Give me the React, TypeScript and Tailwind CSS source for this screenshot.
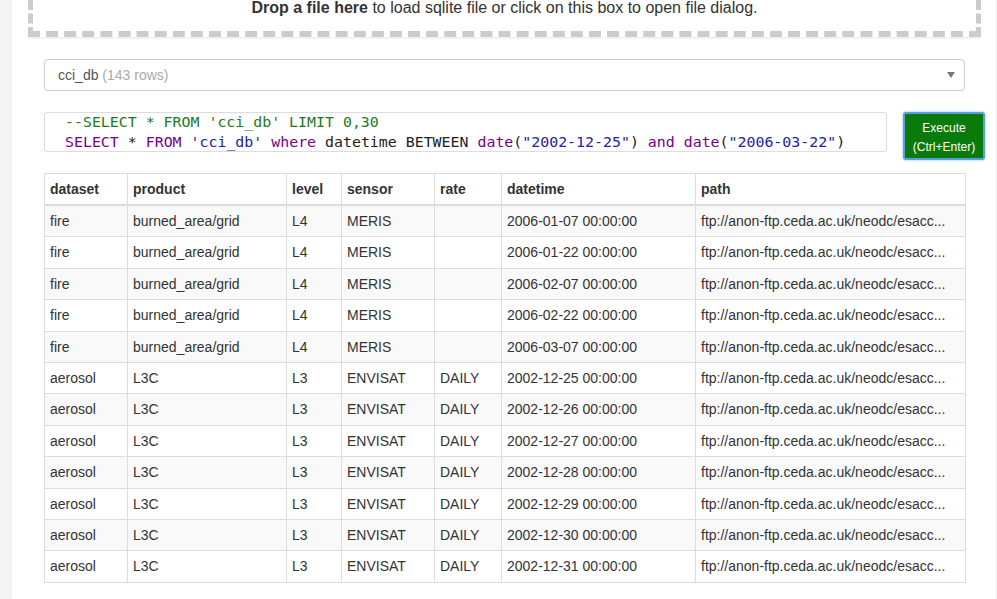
const rows = [
  ["fire", "burned_area/grid", "L4", "MERIS", "", "2006-01-07 00:00:00"],
  ["fire", "burned_area/grid", "L4", "MERIS", "", "2006-01-22 00:00:00"],
  ["fire", "burned_area/grid", "L4", "MERIS", "", "2006-02-07 00:00:00"],
  ["fire", "burned_area/grid", "L4", "MERIS", "", "2006-02-22 00:00:00"],
  ["fire", "burned_area/grid", "L4", "MERIS", "", "2006-03-07 00:00:00"],
  ["aerosol", "L3C", "L3", "ENVISAT", "DAILY", "2002-12-25 00:00:00"],
  ["aerosol", "L3C", "L3", "ENVISAT", "DAILY", "2002-12-26 00:00:00"],
  ["aerosol", "L3C", "L3", "ENVISAT", "DAILY", "2002-12-27 00:00:00"],
  ["aerosol", "L3C", "L3", "ENVISAT", "DAILY", "2002-12-28 00:00:00"],
  ["aerosol", "L3C", "L3", "ENVISAT", "DAILY", "2002-12-29 00:00:00"],
  ["aerosol", "L3C", "L3", "ENVISAT", "DAILY", "2002-12-30 00:00:00"],
  ["aerosol", "L3C", "L3", "ENVISAT", "DAILY", "2002-12-31 00:00:00"],
];

const columns = [
  { name: "dataset", w: "w-[83px]" },
  { name: "product", w: "w-[159px]" },
  { name: "level", w: "w-[55px]" },
  { name: "sensor", w: "w-[93px]" },
  { name: "rate", w: "w-[67px]" },
  { name: "datetime", w: "w-[194px]" },
  { name: "path", w: "" },
];

const path = "ftp://anon-ftp.ceda.ac.uk/neodc/esacc...";

export default function App() {
  return (
    <div className="flex h-[599px] w-[997px] overflow-hidden bg-white font-['Liberation_Sans',Arial,sans-serif] text-[14px] text-[#333]">
      <div className="w-[12px] shrink-0 bg-[#f4f4f4]" />
      <div className="flex-1 border-r border-[#f0f0f0]">
        {/* drop zone, scrolled partly off the top */}
        <div className="ml-[16px] flex h-[37px] w-[953px] justify-center border-x-[5px] border-b-[6px] border-dashed border-[#cccccc] shadow-[0_2px_0_#f2f2f2]">
          <p className="-mt-[3px] text-[16px] leading-[22px] text-[#333]">
            <b>Drop a file here</b> to load sqlite file or click on this box to open file dialog.
          </p>
        </div>

        <div className="ml-[32px] mt-[22px] w-[921px]">
          <div className="flex h-[32px] items-center justify-between rounded-[4px] border border-[#cccccc] pl-[13px] pr-[8px]">
            <span className="text-[#555]">
              cci_db <span className="text-[#aaaaaa]">(143 rows)</span>
            </span>
            <svg width="8" height="6" viewBox="0 0 8 6" className="mr-[1px]">
              <path d="M0 0h8L4 6z" fill="#777" />
            </svg>
          </div>
        </div>

        <div className="ml-[32px] mt-[21px] flex w-[941px] items-start gap-[16px]">
          <div className="h-[40px] w-[843px] overflow-hidden rounded-[3px] border border-[#dddddd] pl-[20px] font-['DejaVu_Sans_Mono',monospace] text-[14.9px] leading-[20px] text-[#222]">
            <div className="-mt-[1px] text-[#1e7a1e]">--SELECT * FROM 'cci_db' LIMIT 0,30</div>
            <div>
              <span className="text-[#770088]">SELECT</span> *{" "}
              <span className="text-[#770088]">FROM</span>{" "}
              <span className="text-[#2222aa]">'cci_db'</span>{" "}
              <span className="text-[#770088]">where</span> datetime BETWEEN{" "}
              <span className="text-[#770088]">date</span>(
              <span className="text-[#2222aa]">"2002-12-25"</span>){" "}
              <span className="text-[#770088]">and</span>{" "}
              <span className="text-[#770088]">date</span>(
              <span className="text-[#2222aa]">"2006-03-22"</span>)
            </div>
          </div>
          <button className="flex h-[48px] w-[82px] flex-col items-center justify-center rounded-[3px] border-2 border-[#5b9ee0] bg-[#0a7a0a] pt-[4px] text-[12px] leading-[19px] text-white shadow-[0_0_3px_#8fbdf0]">
            <span>Execute</span>
            <span>(Ctrl+Enter)</span>
          </button>
        </div>

        <div className="ml-[32px] mt-[13px] w-[922px]">
          <table className="w-full table-fixed border-collapse border border-[#dddddd]">
            <thead>
              <tr className="border-b-2 border-[#dddddd]">
                {columns.map((c) => (
                  <th
                    key={c.name}
                    className={`${c.w} border border-[#dddddd] px-[5px] py-[5px] text-left font-bold leading-[20px]`}
                  >
                    {c.name}
                  </th>
                ))}
              </tr>
            </thead>
            <tbody>
              {rows.map((r, i) => (
                <tr key={i} className={i % 2 === 0 ? "bg-[#f9f9f9]" : "bg-white"}>
                  {[...r, path].map((cell, j) => (
                    <td
                      key={j}
                      className="whitespace-nowrap border border-[#dddddd] px-[5px] py-[5px] leading-[20.4px]"
                    >
                      {cell}
                    </td>
                  ))}
                </tr>
              ))}
            </tbody>
          </table>
        </div>
      </div>
    </div>
  );
}
